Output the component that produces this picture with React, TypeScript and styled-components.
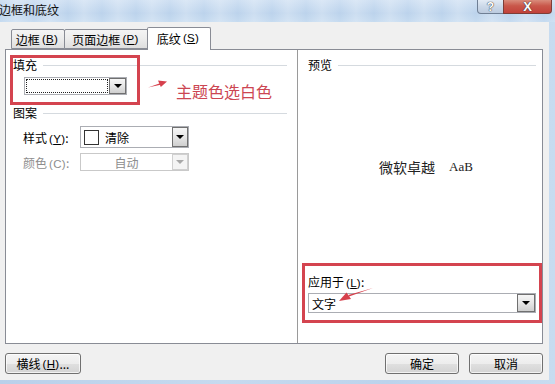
import React from "react";
import styled, { createGlobalStyle } from "styled-components";

const Global = createGlobalStyle`
  html, body { margin: 0; padding: 0; }
  body {
    width: 555px; height: 384px; overflow: hidden;
    font-family: "Noto Sans CJK SC", "Liberation Sans", sans-serif;
    font-size: 12px; color: #000;
  }
`;

const Window = styled.div`
  position: relative;
  width: 555px;
  height: 384px;
  display: flex;
  flex-direction: column;
  background: linear-gradient(90deg, #b9d0ea, #c6daef 40%, #bcd3ec 70%, #c8dcf0);
  overflow: hidden;
`;

const TitleBar = styled.div`
  height: 22px;
  flex: none;
  display: flex;
  align-items: flex-start;
  background:
    repeating-linear-gradient(90deg, rgba(255,255,255,0) 0px, rgba(255,255,255,0.25) 16px, rgba(255,255,255,0) 34px),
    linear-gradient(180deg, #cfe0f3 0%, #bcd3ec 60%, #c6dbf0 100%);
`;

const Title = styled.div`
  font-size: 12px;
  line-height: 20px;
  margin-left: -1px;
  color: #111;
`;

const Caption = styled.div`
  margin-left: auto;
  margin-right: 3px;
  display: flex;
`;

const CapBtn = styled.div<{ $kind: "help" | "close" }>`
  height: 14px;
  width: ${(p) => (p.$kind === "close" ? 49 : 27)}px;
  box-sizing: border-box;
  border: 1px solid ${(p) => (p.$kind === "close" ? "#7d3d37" : "#6f7f95")};
  border-top: none;
  border-radius: ${(p) => (p.$kind === "close" ? "0 0 4px 0" : "0 0 0 4px")};
  margin-left: ${(p) => (p.$kind === "close" ? -1 : 0)}px;
  background: ${(p) =>
    p.$kind === "close"
      ? "linear-gradient(180deg, #d98c7c 0%, #c9574a 45%, #c2413a 100%)"
      : "linear-gradient(180deg, #e3ebf5 0%, #cbd8e8 50%, #bccbdf 100%)"};
  display: flex;
  align-items: center;
  justify-content: center;
  font-family: "Liberation Sans", sans-serif;
  font-weight: bold;
  font-size: ${(p) => (p.$kind === "close" ? 13 : 12)}px;
  line-height: 12px;
  color: #fff;
  text-shadow: 0 0 1px #333, 0 0 1px #333;
`;

const Body = styled.div`
  flex: 1;
  margin: 0 6px 4px 0;
  background: #f0f0f0;
  display: flex;
  flex-direction: column;
  padding: 5px 6px 0 5px;
`;

const TabRow = styled.div`
  height: 22px;
  display: flex;
  align-items: flex-end;
  padding-left: 6px;
`;

const Tab = styled.div<{ $w: number; $active?: boolean }>`
  position: relative;
  z-index: ${(p) => (p.$active ? 2 : 1)};
  box-sizing: border-box;
  width: ${(p) => p.$w}px;
  height: ${(p) => (p.$active ? 23 : 20)}px;
  margin-left: ${(p) => (p.$active ? -2 : -1)}px;
  margin-bottom: ${(p) => (p.$active ? -1 : 0)}px;
  border: 1px solid #898c95;
  border-bottom: ${(p) => (p.$active ? "none" : "1px solid #898c95")};
  border-radius: 2px 2px 0 0;
  background: ${(p) =>
    p.$active ? "#ffffff" : "linear-gradient(180deg, #f4f4f4 0%, #ececec 50%, #dedede 100%)"};
  display: flex;
  align-items: center;
  justify-content: center;
  padding: 0 2px ${(p) => (p.$active ? 2 : 0)}px 0;
  font-size: 12px;
  white-space: nowrap;
  &:first-child { margin-left: 0; }
`;

const Key = styled.span`
  font-family: "Liberation Sans", sans-serif;
  font-size: 11.5px;
  margin-left: 2px;
  letter-spacing: 0.3px;
  u { text-decoration: underline; text-underline-offset: 1px; }
`;

const Panel = styled.div`
  box-sizing: border-box;
  height: 295px;
  border: 1px solid #898c95;
  background: #fff;
  display: grid;
  grid-template-columns: 291px 1fr;
`;

const LeftCol = styled.div`
  padding: 8px 10px 0 7px;
  display: flex;
  flex-direction: column;
`;

const RightCol = styled.div`
  border-left: 1px solid #9a9a9a;
  padding: 8px 6px 30px 10px;
  display: flex;
  flex-direction: column;
`;

const GroupHeader = styled.div<{ $gap?: number }>`
  display: flex;
  align-items: center;
  height: 14px;
  line-height: 14px;
  margin-top: ${(p) => p.$gap ?? 0}px;
  &::after {
    content: "";
    flex: 1;
    height: 1px;
    background: #d5dadf;
    margin-left: 6px;
  }
`;

const Combo = styled.div<{ $w: string; $h: number; $disabled?: boolean }>`
  box-sizing: border-box;
  width: ${(p) => p.$w};
  height: ${(p) => p.$h}px;
  border: 1px solid ${(p) => (p.$disabled ? "#c9c9c9" : "#abadb3")};
  background: #fff;
  display: flex;
  align-items: stretch;
  color: ${(p) => (p.$disabled ? "#8d8d8d" : "#000")};
`;

const FocusField = styled.div`
  flex: 1;
  margin: 1px;
  border: 1px dotted #222;
`;

const Field = styled.div<{ $center?: boolean }>`
  flex: 1;
  display: flex;
  align-items: center;
  justify-content: ${(p) => (p.$center ? "center" : "flex-start")};
  padding-left: ${(p) => (p.$center ? 0 : 3)}px;
  gap: 6px;
  font-size: 12px;
`;

const DropBtn = styled.div<{ $disabled?: boolean; $w?: number }>`
  box-sizing: border-box;
  width: ${(p) => p.$w ?? 17}px;
  flex: none;
  border: 1px solid ${(p) => (p.$disabled ? "#d0d0d0" : "#707070")};
  background: ${(p) =>
    p.$disabled ? "#f4f4f4" : "linear-gradient(180deg, #f6f6f6 0%, #e6e6e6 50%, #cfcfcf 100%)"};
  display: flex;
  align-items: center;
  justify-content: center;
  &::after {
    content: "";
    width: 0;
    height: 0;
    border-left: 4px solid transparent;
    border-right: 4px solid transparent;
    border-top: 4px solid ${(p) => (p.$disabled ? "#a8a8a8" : "#000")};
  }
`;

const FillRow = styled.div`
  margin: 5px 0 0 11px;
`;

const FormRow = styled.div<{ $gap: number; $disabled?: boolean }>`
  display: flex;
  align-items: center;
  margin-top: ${(p) => p.$gap}px;
  padding-left: 10px;
  color: ${(p) => (p.$disabled ? "#8d8d8d" : "#000")};
`;

const Label = styled.div`
  width: 57px;
  font-size: 12px;
  white-space: nowrap;
`;

const Swatch = styled.div`
  width: 15px;
  height: 15px;
  box-sizing: border-box;
  border: 1px solid #333;
  background: #fff;
`;

const PreviewArea = styled.div`
  flex: 1;
  display: flex;
  align-items: center;
  justify-content: center;
  padding: 0 0 14px 8px;
  gap: 14px;
`;

const PreviewCn = styled.span`
  font-size: 14px;
  color: #222;
`;

const PreviewEn = styled.span`
  font-family: "Liberation Serif", serif;
  font-size: 13px;
  color: #222;
`;

const ApplyLabel = styled.div`
  line-height: 14px;
  font-size: 12px;
  margin-bottom: 3px;
`;

const Footer = styled.div`
  display: flex;
  align-items: center;
  gap: 10px;
  margin-top: 9px;
`;

const Button = styled.div<{ $w: number; $push?: boolean }>`
  box-sizing: border-box;
  width: ${(p) => p.$w}px;
  height: 21px;
  margin-left: ${(p) => (p.$push ? "auto" : "0")};
  border: 1px solid #707070;
  border-radius: 3px;
  background: linear-gradient(180deg, #f4f4f4 0%, #ededed 50%, #e0e0e0 51%, #d3d3d3 100%);
  box-shadow: inset 0 0 0 1px rgba(255, 255, 255, 0.7);
  display: flex;
  align-items: center;
  justify-content: center;
  font-size: 12px;
`;

const RedBox = styled.div<{ $x: number; $y: number; $w: number; $h: number }>`
  position: absolute;
  left: ${(p) => p.$x}px;
  top: ${(p) => p.$y}px;
  width: ${(p) => p.$w}px;
  height: ${(p) => p.$h}px;
  box-sizing: border-box;
  border: 3px solid #d4444f;
  pointer-events: none;
`;

const Note = styled.div`
  position: absolute;
  left: 176px;
  top: 80px;
  font-size: 16px;
  line-height: 22px;
  color: #cc4652;
`;

const ArrowSvg = styled.svg<{ $x: number; $y: number }>`
  position: absolute;
  left: ${(p) => p.$x}px;
  top: ${(p) => p.$y}px;
  overflow: visible;
`;

const K = ({ c }: { c: string }) => (
  <Key>
    (<u>{c}</u>)
  </Key>
);

export default function App() {
  return (
    <>
      <Global />
      <Window>
        <TitleBar>
          <Title>边框和底纹</Title>
          <Caption>
            <CapBtn $kind="help">?</CapBtn>
            <CapBtn $kind="close">X</CapBtn>
          </Caption>
        </TitleBar>
        <Body>
          <TabRow>
            <Tab $w={54}>
              边框<K c="B" />
            </Tab>
            <Tab $w={85}>
              页面边框<K c="P" />
            </Tab>
            <Tab $w={64} $active>
              底纹<K c="S" />
            </Tab>
          </TabRow>
          <Panel>
            <LeftCol>
              <GroupHeader>填充</GroupHeader>
              <FillRow>
                <Combo $w="103px" $h={18}>
                  <FocusField />
                  <DropBtn $w={17} />
                </Combo>
              </FillRow>
              <GroupHeader $gap={11}>图案</GroupHeader>
              <FormRow $gap={6}>
                <Label>
                  样式<K c="Y" />:
                </Label>
                <Combo $w="109px" $h={22}>
                  <Field>
                    <Swatch />
                    清除
                  </Field>
                  <DropBtn $w={16} />
                </Combo>
              </FormRow>
              <FormRow $gap={5} $disabled>
                <Label>
                  颜色<Key>(C)</Key>:
                </Label>
                <Combo $w="109px" $h={18} $disabled>
                  <Field $center>自动</Field>
                  <DropBtn $w={16} $disabled />
                </Combo>
              </FormRow>
            </LeftCol>
            <RightCol>
              <GroupHeader>预览</GroupHeader>
              <PreviewArea>
                <PreviewCn>微软卓越</PreviewCn>
                <PreviewEn>AaB</PreviewEn>
              </PreviewArea>
              <ApplyLabel>
                应用于<K c="L" />:
              </ApplyLabel>
              <Combo $w="100%" $h={20}>
                <Field>文字</Field>
                <DropBtn $w={18} />
              </Combo>
            </RightCol>
          </Panel>
          <Footer>
            <Button $w={76}>
              横线<K c="H" />...
            </Button>
            <Button $w={74} $push>
              确定
            </Button>
            <Button $w={74}>取消</Button>
          </Footer>
        </Body>

        <RedBox $x={10} $y={55} $w={130} $h={50} />
        <RedBox $x={302} $y={263} $w={240} $h={60} />
        <Note>主题色选白色</Note>
        <ArrowSvg $x={146} $y={78} width="24" height="12" viewBox="0 0 24 12">
          <path d="M2 9.5 L14 5.2 L14.6 6.8 Z" fill="#d6404c" />
          <path d="M12 2.5 L21 3.5 L14.8 9 Z" fill="#d6404c" />
        </ArrowSvg>
        <ArrowSvg $x={336} $y={286} width="40" height="18" viewBox="0 0 40 18">
          <path d="M37 2 L13 10.5 L12.3 9 Z" fill="#d6404c" />
          <path d="M3 15 L10.5 6.5 L15 13 Z" fill="#d6404c" />
        </ArrowSvg>
      </Window>
    </>
  );
}
